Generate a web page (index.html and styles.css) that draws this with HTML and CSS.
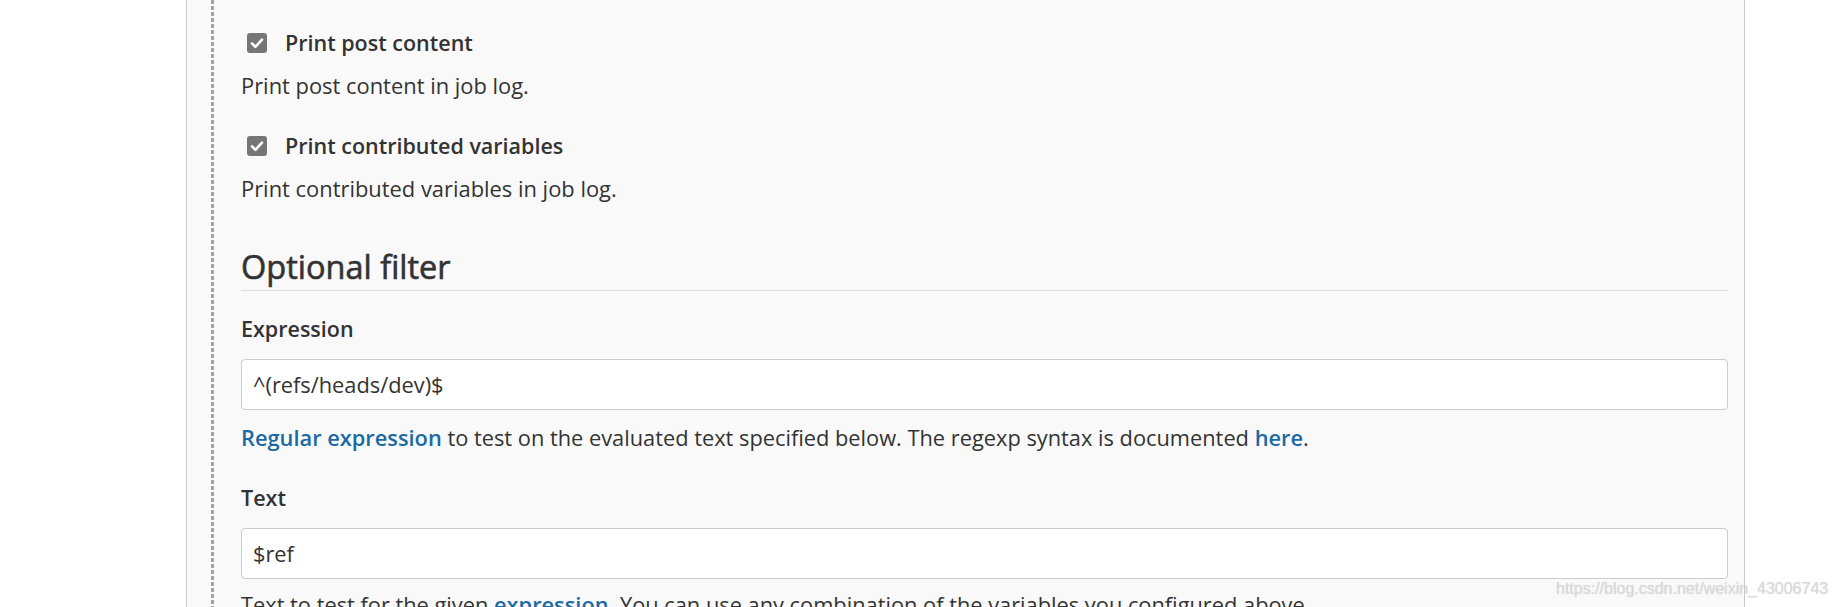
FILE: index.html
```html
<!DOCTYPE html>
<html>
<head>
<meta charset="utf-8">
<link rel="stylesheet" href="styles.css">
</head>
<body>
<div class="page">
  <div class="panel">
    <div class="nested">
      <div class="content">
        <div class="check-row first">
          <span class="checkbox"><svg viewBox="0 0 20 20" width="20" height="20"><path d="M5 10.4 L8.4 13.8 L15 6.6" fill="none" stroke="#fff" stroke-width="2.6" stroke-linecap="round" stroke-linejoin="round"/></svg></span>
          <span class="check-label">Print post content</span>
        </div>
        <div class="desc">Print post content in job log.</div>

        <div class="check-row second">
          <span class="checkbox"><svg viewBox="0 0 20 20" width="20" height="20"><path d="M5 10.4 L8.4 13.8 L15 6.6" fill="none" stroke="#fff" stroke-width="2.6" stroke-linecap="round" stroke-linejoin="round"/></svg></span>
          <span class="check-label">Print contributed variables</span>
        </div>
        <div class="desc">Print contributed variables in job log.</div>

        <h2 class="section-title">Optional filter</h2>

        <div class="field-label first-field">Expression</div>
        <div class="text-input">^(refs/heads/dev)$</div>
        <div class="help"><a class="link">Regular expression</a> to test on the evaluated text specified below. The regexp syntax is documented <a class="link">here</a>.</div>

        <div class="field-label">Text</div>
        <div class="text-input">$ref</div>
        <div class="help last">Text to test for the given <a class="link">expression</a>. You can use any combination of the variables you configured above.</div>
      </div>
    </div>
  </div>
  <div class="watermark">https://blog.csdn.net/weixin_43006743</div>
</div>
</body>
</html>
```

FILE: styles.css
```css
html, body {
  margin: 0;
  padding: 0;
  background: #ffffff;
  overflow: hidden;
}

.page {
  position: relative;
  width: 1836px;
  height: 607px;
  overflow: hidden;
  font-family: "Open Sans", "Noto Sans", sans-serif;
  color: #333333;
}

.panel {
  margin-left: 186px;
  width: 1557px;
  height: 607px;
  background: #f9f9f9;
  border-left: 1px solid #c9c9c9;
  border-right: 1px solid #c9c9c9;
}

.nested {
  margin-left: 24px;
  height: 607px;
  padding-left: 30px;
  padding-right: 16px;
  background-image: repeating-linear-gradient(to bottom, #a3a3a3 0, #a3a3a3 4px, transparent 4px, transparent 6px);
  background-size: 3px 100%;
  background-repeat: no-repeat;
  background-position: 0 0;
}

.content {
  padding-top: 28px;
  white-space: nowrap;
}

.check-row {
  display: flex;
  align-items: center;
  height: 30px;
}

.check-row.second {
  margin-top: 30px;
}

.checkbox {
  width: 20px;
  height: 20px;
  margin-left: 6px;
  border-radius: 3px;
  background: #767676;
  display: flex;
  flex-shrink: 0;
}

.check-label {
  margin-left: 18px;
  font-size: 21.5px;
  font-weight: 600;
  line-height: 30px;
}

.desc {
  margin-top: 13px;
  font-size: 21.9px;
  line-height: 30px;
}

.section-title {
  margin: 43px 0 0 0;
  font-size: 32.5px;
  font-weight: 400;
  -webkit-text-stroke: 0.6px #333333;
  line-height: 40px;
  padding-bottom: 3px;
  border-bottom: 1px solid #dddddd;
}

.field-label {
  margin-top: 30px;
  font-size: 21.5px;
  font-weight: 600;
  line-height: 30px;
}

.field-label.first-field {
  margin-top: 23px;
}

.text-input {
  box-sizing: border-box;
  margin-top: 15px;
  height: 51px;
  background: #ffffff;
  border: 1px solid #cccccc;
  border-radius: 4px;
  padding-left: 11px;
  font-size: 21.8px;
  line-height: 49px;
}

.help {
  margin-top: 13px;
  font-size: 21.8px;
  line-height: 30px;
}

.help.last {
  margin-top: 11px;
}

.link {
  color: #1b6aa6;
  font-weight: 600;
}

.watermark {
  position: absolute;
  left: 1556px;
  top: 580px;
  font-family: "Liberation Sans", Arial, sans-serif;
  font-size: 16px;
  line-height: 18px;
  color: #dadada;
  text-shadow: 0 0 1px rgba(150,150,150,0.35);
  white-space: nowrap;
}
```
